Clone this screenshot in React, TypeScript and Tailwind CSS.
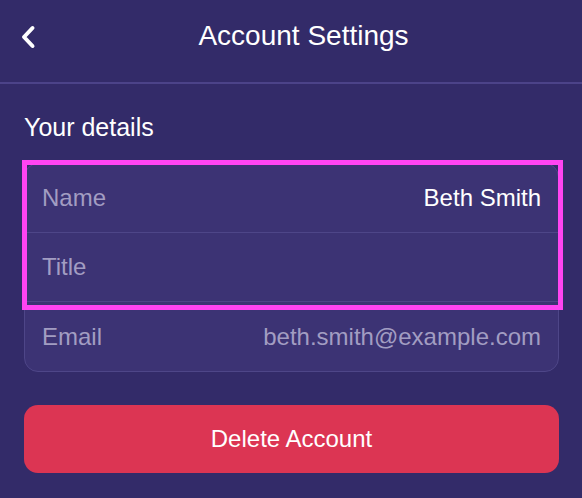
export default function App() {
  const rows = [
    { label: "Name", value: "Beth Smith", strong: true },
    { label: "Title", value: "", strong: false },
    { label: "Email", value: "beth.smith@example.com", strong: false },
  ];

  return (
    <div className="min-h-[498px] w-full bg-[#332b69] font-['Liberation_Sans',Arial,sans-serif] text-white">
      {/* Header */}
      <div className="relative flex h-[84px] items-start justify-center border-b-2 border-[#4c4389] pl-[25px] pt-5">
        <button className="absolute left-[20px] top-[25px] flex h-[24px] w-[16px] items-center justify-center">
          <svg width="16" height="24" viewBox="0 0 16 24" fill="none">
            <path d="M12.5 3 L4 12 L12.5 21" stroke="white" strokeWidth="4" strokeLinecap="round" strokeLinejoin="round" />
          </svg>
        </button>
        <h1 className="text-[28px] leading-[32px]">Account Settings</h1>
      </div>

      <div className="pl-6 pr-[23px]">
        <h2 className="mt-[28px] text-[25px] leading-[30px]">Your details</h2>

        {/* Details card */}
        <div className="relative mt-[21px]">
          <div className="divide-y divide-[#4e4688] overflow-hidden rounded-[14px] border border-[#4e4688] bg-[#3c3374]">
            {rows.map((row) => (
              <div key={row.label} className="flex h-[69px] items-center justify-between px-[17px] text-[24px] leading-[28px]">
                <span className="text-[#a29dc2]">{row.label}</span>
                <span className={row.strong ? "text-white" : "text-[#a29dc2]"}>{row.value}</span>
              </div>
            ))}
          </div>
          {/* Highlight overlay */}
          <div className="pointer-events-none absolute left-[-2px] top-[-3px] h-[150px] w-[541px] border-[5px] border-[#ff44f2]" />
        </div>

        <button className="mt-[33px] flex h-[68px] w-full items-center justify-center rounded-[14px] bg-[#dc3553] text-[24px] leading-[28px] text-white">
          Delete Account
        </button>
      </div>
    </div>
  );
}
